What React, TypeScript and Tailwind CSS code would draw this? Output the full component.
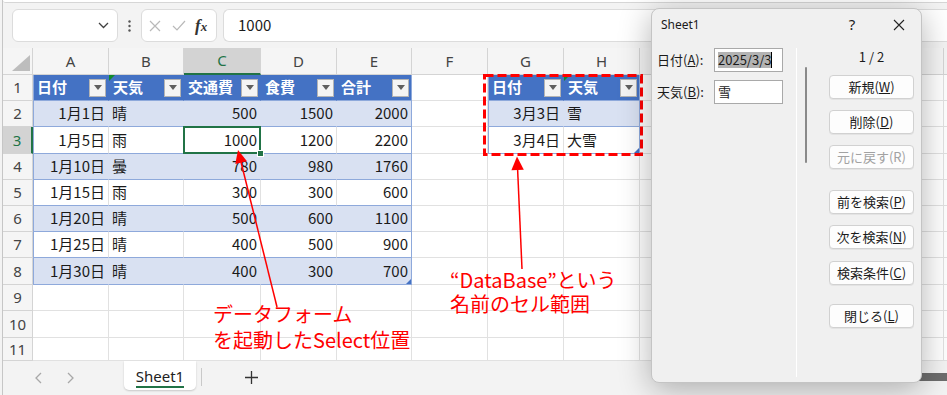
import clsx from 'clsx';

// ── Sheet data ──────────────────────────────────────────────────────────────

const COLS = [
    { label: 'A', w: 'w-[76px]' },
    { label: 'B', w: 'w-[75px]' },
    { label: 'C', w: 'w-[77px]' },
    { label: 'D', w: 'w-[76px]' },
    { label: 'E', w: 'w-[75px]' },
    { label: 'F', w: 'w-[76px]' },
    { label: 'G', w: 'w-[76px]' },
    { label: 'H', w: 'w-[76px]' },
    { label: 'I', w: 'w-[76px]' },
    { label: 'J', w: 'w-[76px]' },
    { label: 'K', w: 'w-[76px]' },
    { label: 'L', w: 'w-[76px]' },
];

const ROW_H = [
    'h-[26px]', 'h-[26px]', 'h-[27px]', 'h-[26px]', 'h-[26px]', 'h-[26px]',
    'h-[26px]', 'h-[27px]', 'h-[26px]', 'h-[27px]', 'h-[23px]',
];

const EXPENSES = [
    ['日付', '天気', '交通費', '食費', '合計'],
    ['1月1日', '晴', '500', '1500', '2000'],
    ['1月5日', '雨', '1000', '1200', '2200'],
    ['1月10日', '曇', '780', '980', '1760'],
    ['1月15日', '雨', '300', '300', '600'],
    ['1月20日', '晴', '500', '600', '1100'],
    ['1月25日', '晴', '400', '500', '900'],
    ['1月30日', '晴', '400', '300', '700'],
];

const DATABASE = [
    ['日付', '天気'],
    ['3月3日', '雪'],
    ['3月4日', '大雪'],
];

type TableHit = { text: string; header: boolean; banded: boolean; first: boolean; last: boolean; corner: boolean; left: boolean };

function lookup(r: number, c: number): TableHit | null {
    if (r >= 1 && r <= 8 && c <= 4) {
        return {
            text: EXPENSES[r - 1][c], header: r === 1, banded: r % 2 === 0,
            first: c === 0, last: c === 4, corner: r === 8 && c === 4, left: c === 1,
        };
    }
    if (r >= 1 && r <= 3 && (c === 6 || c === 7)) {
        return {
            text: DATABASE[r - 1][c - 6], header: r === 1, banded: r % 2 === 0,
            first: c === 6, last: c === 7, corner: r === 3 && c === 7, left: c === 7,
        };
    }
    return null;
}

// ── Small pieces ────────────────────────────────────────────────────────────

function FilterButton() {
    return (
        <span className="ml-auto mr-[2px] flex h-[18px] w-[17px] shrink-0 items-center justify-center border border-[#b4b4b4] bg-[#f4f4f4]">
            <svg width="8" height="5" viewBox="0 0 8 5"><path d="M0 0h8L4 5z" fill="#5f5f5f" /></svg>
        </span>
    );
}

function Cell({ r, c }: { r: number; c: number }) {
    const t = lookup(r, c);
    const selected = r === 3 && c === 2;

    return (
        <div
            className={clsx(
                'relative flex shrink-0 items-center border-r border-b text-[15px]',
                COLS[c].w,
                !t && 'border-r-[#e1e1e1] border-b-[#e1e1e1] bg-white',
                t && t.header && 'bg-[#4472c4] pl-[4px] font-bold text-white border-b-[#8ea9db]',
                t && t.header && (t.last ? 'border-r-[#8ea9db]' : 'border-r-[#4472c4]'),
                t && !t.header && t.banded && 'bg-[#d9e1f2] border-b-[#8ea9db]',
                t && !t.header && t.banded && (t.last ? 'border-r-[#8ea9db]' : 'border-r-[#d9e1f2]'),
                t && !t.header && !t.banded && 'bg-white border-b-[#8ea9db]',
                t && !t.header && !t.banded && (t.last ? 'border-r-[#8ea9db]' : 'border-r-[#e1e1e1]'),
                t && !t.header && (t.left ? 'justify-start pl-[3px]' : 'justify-end pr-[3px]'),
                t && t.first && 'shadow-[inset_1px_0_0_#8ea9db]',
                t && !t.header && 'text-[#1a1a1a]',
            )}
        >
            {t && <span className="whitespace-nowrap">{t.text}</span>}
            {t && t.header && <FilterButton />}
            {t && t.header && t.left && (
                <svg className="absolute left-0 top-0" width="6" height="6" viewBox="0 0 6 6"><path d="M0 0h6L0 6z" fill="#128a2b" /></svg>
            )}
            {t && t.corner && (
                <svg className="absolute bottom-0 right-0" width="5" height="5" viewBox="0 0 5 5"><path d="M5 0v5H0z" fill="#4472c4" /></svg>
            )}
            {selected && (
                <>
                    <div className="absolute -bottom-[1px] -left-[1px] -right-[1px] -top-[1px] z-10 border-2 border-[#217346]" />
                    <div className="absolute -bottom-[4px] -right-[4px] z-10 h-[7px] w-[7px] border border-white bg-[#217346]" />
                </>
            )}
        </div>
    );
}

function DialogButton({ children, disabled, className }: { children: React.ReactNode; disabled?: boolean; className?: string }) {
    return (
        <div
            className={clsx(
                'flex h-[24px] w-[85px] items-center justify-center rounded-[4px] border border-[#d1d1d1] bg-[#fdfdfd] shadow-[0_1px_0_rgba(0,0,0,0.05)]',
                disabled ? 'text-[#a2a2a2]' : 'text-[#1b1b1b]',
                className,
            )}
        >
            {children}
        </div>
    );
}

// ── Main Component ──────────────────────────────────────────────────────────

export default function App() {
    return (
        <div className="relative h-[395px] w-[947px] overflow-hidden bg-[#f3f3f3] pl-[2px] font-['Noto_Sans_CJK_JP',sans-serif]">
            <div className="flex h-full flex-col border-l border-[#c6c6c6]">
                {/* ── Formula bar ──────────────────────────────────────────── */}
                <div className="h-[48px] shrink-0">
                    <div className="h-[3px] rounded-bl-[6px] border-b border-[#d6d6d6] bg-white" />
                    <div className="mt-[6px] flex items-center">
                        <div className="ml-[9px] flex h-[33px] w-[106px] items-center justify-end rounded-[6px] border border-[#dcdcdc] bg-white pr-[8px]">
                            <svg width="11" height="7" viewBox="0 0 11 7"><path d="M1 1l4.5 4.5L10 1" fill="none" stroke="#404040" strokeWidth="1.3" /></svg>
                        </div>
                        <div className="flex w-[23px] justify-center">
                            <svg width="3" height="12" viewBox="0 0 3 12">
                                <circle cx="1.5" cy="1.5" r="1.2" fill="#555" />
                                <circle cx="1.5" cy="6" r="1.2" fill="#555" />
                                <circle cx="1.5" cy="10.5" r="1.2" fill="#555" />
                            </svg>
                        </div>
                        <div className="flex h-[33px] w-[76px] items-center rounded-[6px] border border-[#dcdcdc] bg-white pl-[7px]">
                            <svg width="12" height="12" viewBox="0 0 12 12"><path d="M1 1l10 10M11 1L1 11" stroke="#b9b9b9" strokeWidth="1.2" /></svg>
                            <svg className="ml-[11px]" width="14" height="11" viewBox="0 0 14 11"><path d="M1 6l4 4 8-9" fill="none" stroke="#b9b9b9" strokeWidth="1.2" /></svg>
                            <span className="ml-[9px] font-['Liberation_Serif',serif] text-[17px] font-bold italic leading-none text-[#333]">
                                f<span className="text-[13px]">x</span>
                            </span>
                        </div>
                        <div className="ml-[6px] flex h-[33px] flex-1 items-center rounded-l-[6px] border border-r-0 border-[#dcdcdc] bg-white pl-[14px] text-[15px] text-[#1a1a1a]">
                            1000
                        </div>
                    </div>
                </div>

                {/* ── Column headers ───────────────────────────────────────── */}
                <div className="flex h-[27px] shrink-0 font-['Noto_Sans',sans-serif] text-[15px] text-[#444]">
                    <div className="relative w-[30px] shrink-0 border-r border-b border-[#d4d4d4] bg-[#f5f5f5]">
                        <svg className="absolute bottom-[3px] right-[2px]" width="18" height="16" viewBox="0 0 18 16"><path d="M18 0v16H0z" fill="#bdbdbd" /></svg>
                    </div>
                    {COLS.map((col, c) => (
                        <div
                            key={col.label}
                            className={clsx(
                                'flex shrink-0 items-center justify-center border-r border-[#d4d4d4]',
                                col.w,
                                c === 2 ? 'border-b-2 border-b-[#217346] bg-[#d3d3d3] text-[#217346]' : 'border-b bg-[#f5f5f5]',
                            )}
                        >
                            {col.label}
                        </div>
                    ))}
                    <div className="flex-1 border-b border-[#d4d4d4] bg-[#f5f5f5]" />
                </div>

                {/* ── Rows ─────────────────────────────────────────────────── */}
                {ROW_H.map((h, i) => {
                    const r = i + 1;
                    return (
                        <div key={r} className={clsx('flex shrink-0', h)}>
                            <div
                                className={clsx(
                                    "flex w-[30px] shrink-0 items-center justify-center border-b border-[#d4d4d4] font-['Noto_Sans',sans-serif] text-[15px]",
                                    r === 3 ? 'border-r-2 border-r-[#217346] bg-[#d3d3d3] text-[#217346]' : 'border-r bg-[#f5f5f5] text-[#444]',
                                )}
                            >
                                {r}
                            </div>
                            {COLS.map((col, c) => <Cell key={col.label} r={r} c={c} />)}
                            <div className="flex-1 border-b border-[#e1e1e1] bg-white" />
                        </div>
                    );
                })}

                {/* ── Sheet tabs ───────────────────────────────────────────── */}
                <div className="flex h-[34px] shrink-0 items-start bg-[#f3f3f3]">
                    <svg className="ml-[31px] mt-[11px]" width="8" height="12" viewBox="0 0 8 12"><path d="M7 1L2 6l5 5" fill="none" stroke="#a8a8a8" strokeWidth="1.3" /></svg>
                    <svg className="ml-[25px] mt-[11px]" width="8" height="12" viewBox="0 0 8 12"><path d="M1 1l5 5-5 5" fill="none" stroke="#a8a8a8" strokeWidth="1.3" /></svg>
                    <div className="ml-[49px] flex h-[29px] w-[72px] items-center justify-center rounded-b-[5px] bg-white shadow-[0_1px_2px_rgba(0,0,0,0.18)]">
                        <span className="mt-[3px] border-b-2 border-[#217346] font-['Noto_Sans',sans-serif] text-[15px] leading-[20px] text-[#222]">Sheet1</span>
                    </div>
                    <div className="ml-[5px] mt-[7px] h-[18px] w-px bg-[#c9c9c9]" />
                    <svg className="ml-[43px] mt-[10px]" width="13" height="13" viewBox="0 0 13 13"><path d="M6.5 0v13M0 6.5h13" stroke="#333" strokeWidth="1.3" /></svg>
                    <div className="ml-auto mt-[12px] h-[8px] w-[230px] bg-[#6d6d6d]" />
                </div>
            </div>

            {/* ── Annotations ──────────────────────────────────────────────── */}
            <svg className="pointer-events-none absolute left-0 top-0 z-20" width="947" height="395" viewBox="0 0 947 395">
                <rect x="484.5" y="75.5" width="157" height="79" fill="none" stroke="#ff0000" strokeWidth="3" strokeDasharray="9 4" />
                <line x1="277" y1="307" x2="241" y2="162" stroke="#ff0000" strokeWidth="1.5" />
                <path d="M238 150L247 161.2L235.3 164.1z" fill="#ff0000" />
                <line x1="522" y1="269" x2="517.6" y2="169" stroke="#ff0000" strokeWidth="1.5" />
                <path d="M517 156.5L523.8 169.7L511.4 170.3z" fill="#ff0000" />
            </svg>
            <div className="absolute left-[213px] top-[301px] z-20 whitespace-nowrap text-[20px] leading-[26px] text-[#ff0000]">
                <div>データフォーム</div>
                <div>を起動したSelect位置</div>
            </div>
            <div className="absolute left-[450px] top-[268px] z-20 whitespace-nowrap text-[20px] leading-[24px] text-[#ff0000]">
                <div>“DataBase”という</div>
                <div>名前のセル範囲</div>
            </div>

            {/* ── Data form dialog ─────────────────────────────────────────── */}
            <div className="absolute left-[651px] top-[8px] z-30 flex h-[375px] w-[271px] flex-col rounded-[8px] border border-[#c4c4c4] bg-[#f0f0f0] text-[13px] text-[#1b1b1b] shadow-[0_6px_32px_rgba(0,0,0,0.3)]">
                <div className="flex h-[31px] shrink-0 items-center pl-[9px] pr-[16px]">
                    <span className="font-['Noto_Sans',sans-serif] text-[12px]">Sheet1</span>
                    <span className="ml-auto w-[14px] text-center font-['Noto_Sans',sans-serif] text-[15px]">?</span>
                    <svg className="ml-[34px]" width="12" height="12" viewBox="0 0 12 12"><path d="M1 1l10 10M11 1L1 11" stroke="#222" strokeWidth="1.1" /></svg>
                </div>
                <div className="flex flex-1 pt-[8px]">
                    <div className="w-[144px] shrink-0 pl-[5px]">
                        <div className="flex h-[24px] items-center">
                            <span className="w-[57px] leading-[18px]">日付(<u>A</u>):</span>
                            <div className="flex h-[24px] w-[69px] items-center border border-[#a9a9a9] bg-white pl-[3px]">
                                <span className="bg-[#b3b3b3] leading-[16px]">2025/3/3</span>
                                <span className="h-[16px] w-px bg-black" />
                            </div>
                        </div>
                        <div className="mt-[8px] flex h-[24px] items-center">
                            <span className="w-[57px] leading-[18px]">天気(<u>B</u>):</span>
                            <div className="flex h-[24px] w-[69px] items-center border border-[#a9a9a9] bg-white pl-[3px]">雪</div>
                        </div>
                    </div>
                    <div className="mb-[5px] w-px bg-white" />
                    <div className="w-[26px] shrink-0">
                        <div className="ml-[8px] mt-[19px] h-[96px] w-[2px] rounded-full bg-[#8a8a8a]" />
                    </div>
                    <div className="pl-[6px]">
                        <div className="h-[18px] w-[85px] text-center leading-[18px]">1 / 2</div>
                        <DialogButton className="mt-[9px]">新規(<u>W</u>)</DialogButton>
                        <DialogButton className="mt-[11px]">削除(<u>D</u>)</DialogButton>
                        <DialogButton className="mt-[11px]" disabled>元に戻す(R)</DialogButton>
                        <DialogButton className="mt-[21px]">前を検索(<u>P</u>)</DialogButton>
                        <DialogButton className="mt-[11px]">次を検索(<u>N</u>)</DialogButton>
                        <DialogButton className="mt-[12px]">検索条件(<u>C</u>)</DialogButton>
                        <DialogButton className="mt-[19px]">閉じる(<u>L</u>)</DialogButton>
                    </div>
                </div>
            </div>
        </div>
    );
}
